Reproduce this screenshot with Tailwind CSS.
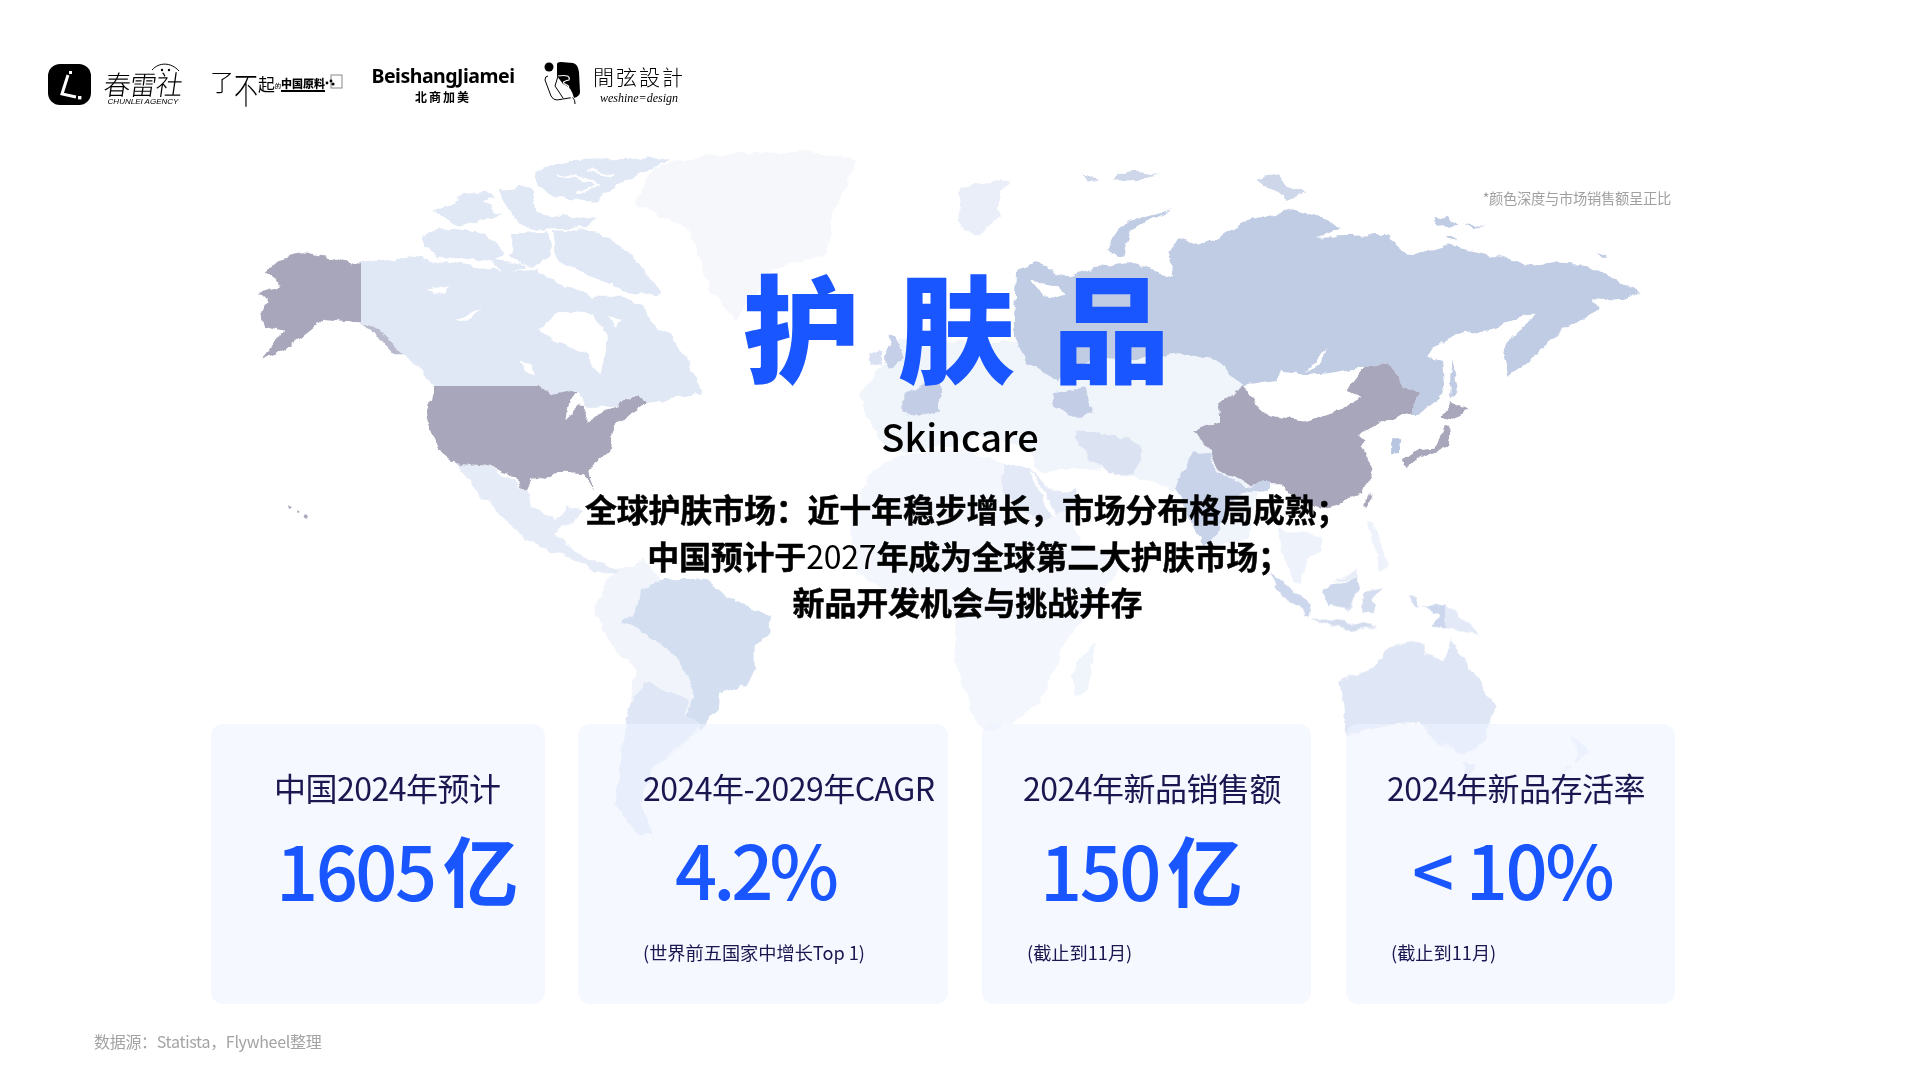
<!DOCTYPE html>
<html lang="zh-CN">
<head>
  <meta charset="UTF-8" />
  <title>护肤品 Skincare</title>
  <script src="https://cdn.jsdelivr.net/npm/@tailwindcss/browser@4"></script>
</head>
<body class="bg-white">
  <div class="relative w-[1920px] h-[1080px] overflow-hidden bg-white font-['Noto_Sans_CJK_SC','Noto_Sans',sans-serif]">

    <!-- world map, drawn behind everything -->
    <svg class="absolute inset-0" width="1920" height="1080" viewBox="0 0 1920 1080">
      <defs>
        <!-- roughens the straight polygon edges into a coastline -->
        <filter id="coast" filterUnits="userSpaceOnUse" x="0" y="0" width="1920" height="1080">
          <feTurbulence type="fractalNoise" baseFrequency=".07" numOctaves="3" seed="7" result="noise"/>
          <feDisplacementMap in="SourceGraphic" in2="noise" scale="9" xChannelSelector="R" yChannelSelector="G"/>
        </filter>
      </defs>
      <g filter="url(#coast)">
      <!-- Greenland, Americas -->
      <g transform="translate(200,130) scale(.5102,.3333)">
        <path fill="#f6f7fa" d="M890,110 C1000,60 1180,50 1290,90 L1240,250 L1230,370 L1120,420 L1050,570 L1000,480 L960,300 L850,220 Z"/>
        <path fill="#e0e7f5" d="M316,402 L420,380 L510,405 L600,425 L660,420 L700,460 L740,480 L770,500 L830,500 L870,530 L890,590 L925,620 L960,700 L985,790 L930,800 L875,825 L860,790 L810,830 L760,830 L740,785 L690,790 L665,765 L455,768 L440,730 L400,670 L350,595 L316,580 Z"/>
        <path fill="#fff" d="M665,600 L700,545 L770,550 L800,620 L790,700 L785,730 L765,710 L760,670 L700,640 Z"/>
        <path fill="#fff" d="M500,570 L550,535 L530,568 Z M445,480 L490,465 L465,495 Z M630,690 L645,695 L655,740 L640,730 Z M800,560 L830,575 L815,590 Z"/>
        <g fill="#e0e7f5">
          <path d="M655,130 L720,90 L920,85 L840,150 L790,190 L780,215 L720,210 L660,170 Z"/>
          <path d="M690,305 L770,300 L840,360 L900,480 L895,500 L830,480 L770,440 L700,395 Z"/>
          <path d="M435,320 L470,295 L560,310 L600,370 L570,395 L480,385 L435,350 Z"/>
          <path d="M455,245 L540,195 L590,255 L510,290 Z"/>
          <path d="M590,180 L650,170 L660,250 L780,270 L750,295 L650,300 L600,240 Z"/>
          <path d="M610,310 L680,305 L690,375 L650,415 L610,380 Z"/>
          <path d="M860,770 L920,750 L985,790 L930,800 Z"/>
          <path d="M500,200 L560,185 L575,205 L520,225 Z"/>
          <path d="M560,390 L620,395 L640,410 L600,430 Z"/>
        </g>
        <path fill="none" stroke="#fff" stroke-width="6" d="M700,130 L780,165 L740,190 M760,120 L810,140"/>
        <path fill="#e6ecf7" d="M500,995 L570,1010 L640,1080 L650,1130 L700,1170 L720,1135 L750,1140 L720,1190 L690,1210 L760,1290 L800,1310 L840,1330 L790,1330 L730,1290 L640,1230 L590,1160 L540,1080 Z"/>
        <path fill="#a7a6bb" d="M455,768 L665,765 L690,790 L720,780 L740,790 L725,810 L718,868 L745,830 L757,830 L755,872 L800,840 L860,790 L875,825 L830,868 L808,900 L800,965 L760,1020 L775,1085 L755,1030 L710,1025 L650,1050 L640,1080 L600,1030 L570,1010 L495,995 L465,960 L442,860 L455,800 Z"/>
        <path fill="#a7a6bb" d="M316,402 L200,370 L150,392 L125,425 L160,465 L115,485 L135,515 L120,545 L125,590 L165,605 L120,690 L170,655 L240,570 L316,580 Z"/>
        <path fill="#b9bacd" d="M316,580 L350,595 L400,670 L380,670 L345,615 Z"/>
      </g>
      <!-- South America -->
      <g transform="translate(400,560) scale(.5102,.3333)">
        <path fill="#f1f4fb" d="M380,150 L410,50 L480,-10 L510,60 L470,90 L465,150 L435,185 L470,215 L500,240 L545,290 L580,410 L560,465 L590,510 L560,550 L520,600 L440,600 L460,330 L410,250 Z"/>
        <path fill="#d3dff1" d="M435,185 L465,150 L470,90 L510,60 L600,60 L640,110 L725,170 L725,215 L695,260 L695,330 L680,370 L625,405 L620,450 L590,510 L560,465 L580,410 L545,290 L500,240 L470,215 Z"/>
      </g>
      <path fill="#dfe6f5" d="M645,683 L678,693 L690,700 L684,715 L700,724 L712,710 L687,740 L668,753 L653,767 L640,807 L653,833 L638,833 L615,807 L628,710 Z"/>
      <!-- Africa -->
      <path fill="#f3f6fc" d="M870,473 L900,455 L960,450 L1000,462 L1030,470 L1060,500 L1085,545 L1125,560 L1100,600 L1065,640 L1045,690 L1040,700 L1020,720 L985,733 L975,720 L955,660 L955,620 L940,590 L890,595 L855,570 L850,520 Z"/>
      <path fill="#f0f4fb" d="M1094,642 L1096,653 L1086,692 L1076,694 L1072,677 L1079,660 Z"/>
      <!-- Eurasia, light base and mid tones -->
      <g transform="translate(840,360) scale(.3333)">
        <path fill="#f0f4fb" d="M60,100 L180,-60 L1200,-40 L1250,400 L1220,540 L1100,560 L1030,400 L900,350 L700,320 L600,340 L560,260 L420,230 L330,260 L200,280 L140,260 L80,180 Z"/>
        <path fill="#e3e9f6" d="M490,310 L570,320 L630,400 L710,390 L720,420 L640,470 L600,490 L540,440 L490,400 Z"/>
        <path fill="#fff" d="M570,335 L580,340 L650,470 L635,470 Z"/>
        <path fill="#dbe3f3" d="M710,210 L860,230 L910,270 L880,340 L800,340 L750,300 L720,260 Z"/>
        <path fill="#c3cde5" d="M640,100 L740,80 L760,160 L700,170 L630,130 Z"/>
        <path fill="#c3cde5" d="M190,100 L300,50 L300,150 L230,170 L190,150 Z"/>
        <path fill="#c8d3ea" d="M1060,280 L1110,275 L1130,340 L1220,380 L1300,350 L1280,400 L1230,390 L1180,420 L1130,530 L1090,560 L1060,500 L1020,410 L1005,380 Z"/>
      </g>
      <g transform="translate(200,130) scale(.5102,.3333)">
        <path fill="#c5cfe7" d="M1345,610 L1365,620 L1380,690 L1350,710 L1340,680 L1355,650 Z"/>
        <path fill="#d8e0f2" d="M1312,672 L1335,665 L1335,700 L1315,705 Z"/>
        <path fill="#e9eef8" d="M1480,270 L1520,170 L1568,150 L1568,260 L1520,320 Z"/>
      </g>
      <!-- Russia, China, Japan, Korea -->
      <g transform="translate(960,130) scale(.5102,.3333)">
        <path fill="#e9eef8" d="M0,170 L100,150 L40,240 L0,240 Z"/>
        <path fill="#c0cbe4" d="M110,420 L150,400 L190,430 L220,440 L265,410 L330,400 L420,440 L410,370 L430,325 L470,345 L510,320 L560,275 L650,240 L720,265 L745,290 L700,320 L830,315 L880,375 L950,345 L1060,380 L1110,410 L1160,400 L1230,405 L1300,460 L1330,480 L1305,510 L1240,505 L1250,540 L1180,600 L1120,690 L1075,735 L1065,670 L1080,620 L1125,570 L1130,545 L1040,600 L965,610 L915,680 L945,690 L950,790 L900,855 L880,855 L905,785 L870,770 L840,700 L795,710 L720,730 L680,735 L630,725 L620,750 L555,765 L500,690 L430,670 L330,690 L260,680 L190,750 L130,700 L105,600 Z"/>
        <path fill="#fff" d="M140,455 L185,465 L205,490 L170,510 Z M700,690 L716,660 L712,695 L675,730 Z"/>
        <path fill="#c0cbe4" d="M285,365 L320,280 L415,240 L380,265 L335,300 L320,380 Z M965,690 L975,770 L960,810 Z M1243,372 L1270,368 L1268,380 Z M925,265 L955,260 L975,285 L935,290 Z M985,280 L1030,285 L1005,292 Z M950,315 L975,325 L955,330 Z"/>
        <path fill="#ced7ea" d="M585,150 L620,130 L640,170 L680,190 L640,210 Z M240,140 L275,145 L250,155 Z M310,130 L345,125 L390,135 L340,150 L300,155 Z"/>
        <path fill="#b9c6e2" d="M845,925 L865,925 L862,965 L845,970 Z"/>
        <path fill="#a7a6bb" d="M555,765 L580,820 L610,860 L680,875 L730,850 L790,800 L760,780 L795,710 L840,700 L870,770 L905,785 L880,855 L840,865 L780,915 L795,935 L785,950 L810,1010 L790,1090 L720,1135 L650,1100 L630,1060 L570,1060 L510,1030 L490,960 L455,905 L510,870 L505,825 Z"/>
        <path fill="#a7a6bb" d="M950,885 L960,900 L955,950 L900,985 L875,1015 L868,985 L900,955 L930,950 L945,910 Z M960,820 L995,840 L965,870 L945,860 Z"/>
      </g>
      <!-- South East Asia, Australia -->
      <g transform="translate(1240,480) scale(.3333)">
        <path fill="#a7a6bb" d="M388,40 L398,45 L385,78 L378,70 Z"/>
        <path fill="#eef2fb" d="M115,150 L250,170 L240,210 L200,235 L185,310 L160,300 L135,240 Z M380,130 L400,130 L445,260 L420,270 L400,200 Z"/>
        <path fill="#ccd6ec" d="M90,280 L215,370 L210,410 L130,350 Z"/>
        <path fill="#d3dcef" d="M210,415 L300,425 L415,440 L370,450 L280,440 Z"/>
        <path fill="#ced8ed" d="M245,330 L350,290 L360,325 L330,385 L265,375 Z"/>
        <path fill="#e8edf8" d="M275,310 L350,265 L350,290 Z"/>
        <path fill="#d4ddf0" d="M360,380 L375,335 L430,325 L395,355 L400,395 L370,405 Z M505,350 L535,350 L540,385 L515,370 Z"/>
        <path fill="#ccd7ee" d="M550,380 L620,375 L620,445 L580,440 L600,410 Z"/>
        <path fill="#e3e9f6" d="M620,375 L690,430 L725,465 L620,445 Z"/>
        <path fill="#dfe6f5" d="M298,605 L400,560 L450,505 L500,480 L550,490 L560,520 L610,550 L630,470 L670,540 L720,610 L765,680 L730,790 L680,825 L620,800 L570,770 L540,725 L420,740 L320,765 L310,680 Z"/>
        <path fill="#dfe6f5" d="M665,850 L700,850 L695,885 L675,885 Z"/>
        <path fill="#e9effa" d="M995,770 L1050,810 L1010,850 Z M1000,850 L915,935 L980,860 Z"/>
      </g>
      </g>
      <!-- the ruler-straight borders stay outside the filter -->
      <path fill="#e0e7f5" d="M361,262 H369 V322 H361 Z M434,378 H538 V386 H434 Z"/>
      <path fill="#a7a6bb" d="M352,264 H361 V322 H352 Z M434,386 H538 V396 H434 Z"/>
      <path fill="#a7a6bb" d="M288,505 l4,2.5 l-3,1.5 Z M297,510 l3,2 l-2.5,1 Z M305,514 l3,2 l-1.5,3 l-3,-2 Z"/>
    </svg>

    <div class="relative flex flex-col h-full">
      <!-- partner logos -->
      <div class="flex items-center h-[72px] mt-[48px] pl-[48px] text-black">
        <div class="w-[43px] h-[41px] rounded-[12px] bg-black shrink-0">
          <svg width="43" height="41" viewBox="0 0 43 41"><path d="M20 11 L14 30 L28 33" fill="none" stroke="#fff" stroke-width="3"/><rect x="21" y="7" width="3" height="3" fill="#fff"/><rect x="30" y="32" width="3.4" height="3.4" fill="#fff"/></svg>
        </div>
        <div class="flex flex-col items-center ml-[12px] w-[80px] shrink-0">
          <svg class="h-[10px] -mb-[2px] self-end mr-[2px]" width="30" height="10" viewBox="0 0 30 10"><path d="M1 8 C8 0 20 0 28 9" fill="none" stroke="#000" stroke-width="1"/><circle cx="11" cy="8" r="1.2"/><circle cx="18" cy="8" r="1.2"/></svg>
          <span class="text-[27px] leading-[27px] font-light skew-x-[-8deg] tracking-[-1px] whitespace-nowrap">春雷社</span>
          <span class="text-[8px] leading-[10px] italic font-['Liberation_Sans',sans-serif] whitespace-nowrap">CHUNLEI AGENCY</span>
        </div>
        <div class="flex items-center ml-[27px] w-[132px] shrink-0">
          <span class="text-[24px] leading-[28px] font-extralight mb-[6px]">了</span>
          <span class="text-[24px] leading-[28px] font-extralight mt-[10px] scale-y-150">不</span>
          <span class="text-[17px] leading-[20px] font-normal">起</span>
          <span class="text-[6px] leading-[8px] font-medium mt-[4px]">的</span>
          <span class="text-[11px] leading-[14px] font-black border-b-2 border-black whitespace-nowrap">中国原料</span>
          <svg class="shrink-0 -mt-[6px]" width="18" height="15" viewBox="0 0 18 15"><rect x="6" y="1" width="11" height="13" fill="none" stroke="#888" stroke-width="1"/><circle cx="2" cy="9" r="1.4"/><circle cx="6" cy="7" r="1.4"/><circle cx="8" cy="10" r="1.6"/></svg>
        </div>
        <div class="flex flex-col items-center ml-[30px] w-[142px] shrink-0">
          <span class="text-[19.5px] leading-[24px] font-bold font-['Noto_Sans',sans-serif] tracking-[-.5px] whitespace-nowrap">BeishangJiamei</span>
          <span class="text-[12px] leading-[16px] font-bold tracking-[2px] mt-[1px] whitespace-nowrap">北商加美</span>
        </div>
        <svg class="ml-[29px] shrink-0" width="38" height="44" viewBox="0 0 38 44">
          <circle cx="6" cy="5" r="4.5" fill="#000"/>
          <path d="M14 2 Q14 0 18 0 L30 1 Q35 2 36 10 L37 30 Q37 34 31 36 Q28 24 20 22 L14 14 Z" fill="#000"/>
          <path d="M5 14 Q2 14 2 18 L8 34 Q10 38 14 38 L26 36 Q32 34 32 42" fill="none" stroke="#000" stroke-width="1"/>
          <path d="M15 14 Q28 12 26 18 Q16 20 24 23 Q29 26 20 28 Q30 34 30 40" fill="none" stroke="#fff" stroke-width="1.2"/>
          <path d="M15 14 L12 24 L20 36" fill="none" stroke="#000" stroke-width="1"/>
        </svg>
        <div class="flex flex-col items-center ml-[13px] w-[90px] shrink-0">
          <span class="text-[21px] leading-[24px] font-extralight tracking-[2px] whitespace-nowrap">間弦設計</span>
          <span class="text-[12px] leading-[14px] italic font-['Liberation_Serif',serif] mt-[3px] whitespace-nowrap">weshine=design</span>
        </div>
      </div>

      <p class="self-end mr-[249px] mt-[68px] text-[14.3px] leading-[20px] text-[#a0a0a0] tracking-[-.3px]">*颜色深度与市场销售额呈正比</p>

      <h1 class="mt-[46px] h-[138px] leading-[138px] pl-[743px] text-[117px] font-black text-[#1a56ff] tracking-[38px] whitespace-nowrap">护肤品</h1>
      <p class="mt-[16px] h-[56px] leading-[56px] text-center text-[38px] font-medium text-black">Skincare</p>

      <div class="mt-[21px] text-center text-[32px] leading-[46.5px] font-bold tracking-[-.2px] text-black [-webkit-text-stroke:.5px_black]">
        <p class="pl-[13px]">全球护肤市场&#xFF1A;近十年稳步增长&#xFF0C;市场分布格局成熟&#xFF1B;</p>
        <p class="pl-[17px]">中国预计于<span class="font-normal [-webkit-text-stroke:0]">2027</span>年成为全球第二大护肤市场&#xFF1B;</p>
        <p class="pl-[15px]">新品开发机会与挑战并存</p>
      </div>

      <!-- figures -->
      <div class="flex mt-[99px] pl-[211px] text-[#1a1650]">
        <div class="w-[334px] h-[280px] rounded-[12px] bg-[#eef3ff]/60 shrink-0">
          <p class="mt-[41px] pl-[63px] text-[32px] leading-[44px] tracking-[-.5px] whitespace-nowrap">中国2024年预计</p>
          <p class="mt-[14px] pl-[65px] h-[90px] leading-[90px] text-[#1a56ff] text-[74px] font-medium tracking-[-2.5px] whitespace-nowrap">1605<span class="ml-[8px] text-[76px] font-bold">亿</span></p>
        </div>
        <div class="w-[370px] h-[280px] rounded-[12px] bg-[#eef3ff]/60 shrink-0 ml-[33px]">
          <p class="mt-[41px] pl-[65px] text-[32px] leading-[44px] tracking-[-.5px] whitespace-nowrap">2024年-2029年CAGR</p>
          <p class="mt-[14px] pl-[97px] h-[90px] leading-[90px] text-[#1a56ff] text-[74px] font-medium tracking-[-4px] whitespace-nowrap">4.2%</p>
          <p class="mt-[25px] pl-[65px] text-[18.2px] leading-[28px] whitespace-nowrap">(世界前五国家中增长Top 1)</p>
        </div>
        <div class="w-[329px] h-[280px] rounded-[12px] bg-[#eef3ff]/60 shrink-0 ml-[34px]">
          <p class="mt-[41px] pl-[41px] text-[32px] leading-[44px] tracking-[-.5px] whitespace-nowrap">2024年新品销售额</p>
          <p class="mt-[14px] pl-[58px] h-[90px] leading-[90px] text-[#1a56ff] text-[74px] font-medium tracking-[-2.5px] whitespace-nowrap">150<span class="ml-[8px] text-[76px] font-bold">亿</span></p>
          <p class="mt-[25px] pl-[45px] text-[18.2px] leading-[28px] whitespace-nowrap">(截止到11月)</p>
        </div>
        <div class="w-[329px] h-[280px] rounded-[12px] bg-[#eef3ff]/60 shrink-0 ml-[35px]">
          <p class="mt-[41px] pl-[41px] text-[32px] leading-[44px] tracking-[-.5px] whitespace-nowrap">2024年新品存活率</p>
          <p class="mt-[14px] pl-[66px] h-[90px] leading-[90px] text-[#1a56ff] text-[74px] font-medium tracking-[-2.5px] whitespace-nowrap">&lt; 10%</p>
          <p class="mt-[25px] pl-[45px] text-[18.2px] leading-[28px] whitespace-nowrap">(截止到11月)</p>
        </div>
      </div>

      <p class="mt-[24px] pl-[94px] text-[16px] leading-[26px] tracking-[-.3px] text-[#a3a3a3]">数据源&#xFF1A;Statista&#xFF0C;Flywheel整理</p>
    </div>
  </div>
</body>
</html>
